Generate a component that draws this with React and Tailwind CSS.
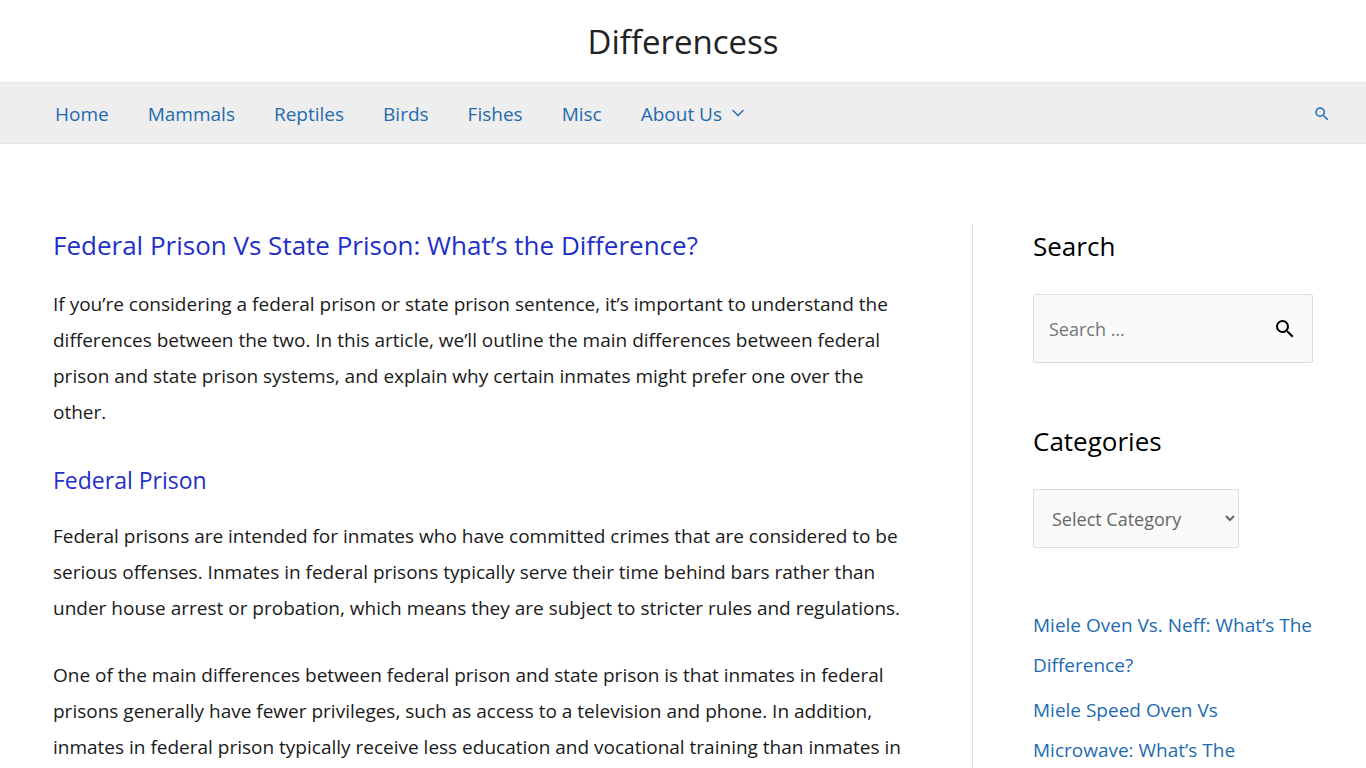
import React, { useState } from "react";
import { MdSearch } from "react-icons/md";

const navItems = [
  { label: "Home", href: "#home" },
  { label: "Mammals", href: "#mammals" },
  { label: "Reptiles", href: "#reptiles" },
  { label: "Birds", href: "#birds" },
  { label: "Fishes", href: "#fishes" },
  { label: "Misc", href: "#misc" },
  { label: "About Us", href: "#about", hasMenu: true },
];

const recentPosts = [
  "Miele Oven Vs. Neff: What’s The Difference?",
  "Miele Speed Oven Vs Microwave: What’s The Difference?",
];

const categories = ["Mammals", "Reptiles", "Birds", "Fishes", "Misc"];

const Header = () => (
  <header>
    <div className="flex h-[82px] items-center justify-center pt-0.5">
      <a href="#home" className="text-[33px] leading-[48px] text-[#222222]">
        Differencess
      </a>
    </div>
    <nav className="flex h-[62px] items-center justify-between border-y border-[#e6e6e6] bg-[#eeeeee] pt-0.5 pr-[35px] pl-[55px] text-[#1e6bb0]">
      <ul className="flex gap-[39px] text-[19px] leading-7">
        {navItems.map((item) => (
          <li key={item.label}>
            <a href={item.href} className="flex items-center gap-2.5">
              {item.label}
              {item.hasMenu && (
                <svg className="h-3 w-3" viewBox="0 0 12 12" fill="none" stroke="currentColor" strokeWidth="1.3">
                  <path d="M0.5 2L6 7.5L11.5 2" />
                </svg>
              )}
            </a>
          </li>
        ))}
      </ul>
      <button type="button" aria-label="Search">
        <MdSearch className="h-[18px] w-[18px]" />
      </button>
    </nav>
  </header>
);

const Article = () => (
  <main className="min-w-0 flex-1 border-r border-[#dddddd] pr-[60px]">
    <h1 className="mb-5 text-[26px] leading-[42px] text-[#2230c8]">
      Federal Prison Vs State Prison: What’s the Difference?
    </h1>
    <p className="mb-[31px]">
      If you’re considering a federal prison or state prison sentence, it’s important to understand the
      differences between the two. In this article, we’ll outline the main differences between federal
      prison and state prison systems, and explain why certain inmates might prefer one over the other.
    </p>
    <h2 className="mb-[19px] text-[23px] leading-[38px] text-[#2230c8]">Federal Prison</h2>
    <p className="mb-[31px]">
      Federal prisons are intended for inmates who have committed crimes that are considered to be
      serious offenses. Inmates in federal prisons typically serve their time behind bars rather than
      under house arrest or probation, which means they are subject to stricter rules and regulations.
    </p>
    <p>
      One of the main differences between federal prison and state prison is that inmates in federal
      prisons generally have fewer privileges, such as access to a television and phone. In addition,
      inmates in federal prison typically receive less education and vocational training than inmates in
      state prison.
    </p>
  </main>
);

const Sidebar = () => {
  const [query, setQuery] = useState("");
  const [category, setCategory] = useState("");

  return (
    <aside className="w-[340px] shrink-0 pl-[60px]">
      <section className="mb-14">
        <h2 className="mb-[26px] text-[26px] leading-[44px] text-black">
          <label htmlFor="search">Search</label>
        </h2>
        <form
          className="flex h-[69px] items-center rounded-xs border border-[#dddddd] bg-[#fafafa] pr-[15px] pl-[15px]"
          onSubmit={(e) => e.preventDefault()}
        >
          <input
            id="search"
            type="search"
            placeholder="Search …"
            className="min-w-0 flex-1 bg-transparent text-[18px] outline-none placeholder:text-[#757575]"
            value={query}
            onChange={(e) => setQuery(e.target.value)}
          />
          <button type="submit" aria-label="Submit search" className="text-black">
            <MdSearch className="h-6 w-6" />
          </button>
        </form>
      </section>

      <section className="mb-[57px]">
        <h2 className="mb-[26px] text-[26px] leading-[44px] text-black">
          <label htmlFor="category">Categories</label>
        </h2>
        <select
          id="category"
          className="h-[59px] w-[206px] rounded-xs border border-[#dddddd] bg-[#fafafa] pl-[14px] text-[18px] text-[#666666]"
          value={category}
          onChange={(e) => setCategory(e.target.value)}
        >
          <option value="">Select Category</option>
          {categories.map((name) => (
            <option key={name} value={name}>
              {name}
            </option>
          ))}
        </select>
      </section>

      <ul className="space-y-[5px] leading-10 text-[#1e6bb0]">
        {recentPosts.map((title) => (
          <li key={title}>
            <a href="#post">{title}</a>
          </li>
        ))}
      </ul>
    </aside>
  );
};

const App = () => {
  return (
    <div className="min-h-screen bg-white font-['Segoe_UI','Open_Sans',sans-serif] text-[19px] leading-9 text-[#1a1a1a]">
      <Header />
      <div className="flex px-[53px] pt-20">
        <Article />
        <Sidebar />
      </div>
    </div>
  );
};

export default App;
